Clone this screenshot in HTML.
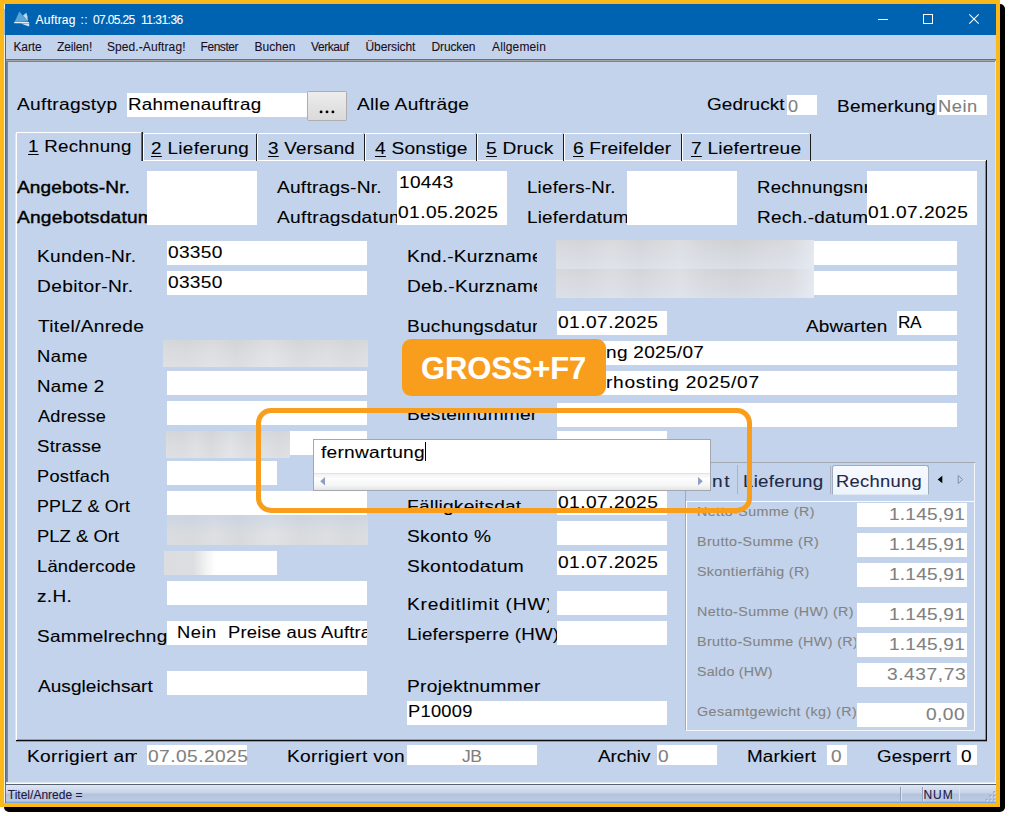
<!DOCTYPE html>
<html><head><meta charset="utf-8"><title>Auftrag</title><style>
html,body{margin:0;padding:0}
body{width:1009px;height:816px;background:#fff;overflow:hidden;position:relative;font-family:"Liberation Sans", sans-serif}
#r div,#r svg,#r span{position:absolute}
#r{position:absolute;left:0;top:0;width:1009px;height:816px;overflow:hidden}
.t{white-space:pre;line-height:1;transform-origin:0 0;display:block;-webkit-text-stroke:0.09px currentColor}
.c{overflow:hidden}
u{text-decoration-thickness:1.2px;text-underline-offset:2.2px}
</style></head><body><div id="r">
<div style="left:4px;top:4px;width:1001px;height:808px;background:#000;border-radius:5px"></div>
<div style="left:0px;top:0px;width:1000.25px;height:806.75px;background:#FAB81A;"></div>
<div style="left:1000px;top:0px;width:0.4px;height:806.75px;background:linear-gradient(90deg,#FAB81A,#7d5c0d);"></div>
<div style="left:4px;top:4px;width:992px;height:798.5px;background:#C2D3EB;"></div>
<div style="left:4px;top:4px;width:1px;height:798.5px;background:#f6f3e4;"></div>
<div style="left:5px;top:4px;width:991px;height:30.75px;background:#0063B1;"></div>
<div style="left:4px;top:9px;width:1px;height:26px;background:#9cc0e4;"></div>
<div style="left:5px;top:35px;width:1px;height:767.5px;background:#2277c3;"></div>
<svg style="left:13px;top:10px" width="18" height="18" viewBox="0 0 18 18">
<polygon points="6.4,1.4 1.6,12 14.8,11.4" fill="#5AA6D8"/>
<polygon points="13.3,2.7 10.0,5.4 14.8,11.2 14.5,6.5" fill="#B9D9F1"/>
<polygon points="1.0,12.1 15.8,12.1 16.2,13.2 1.4,13.3" fill="#e4f1fa"/>
<polygon points="8,13.6 16.2,13.6 16.2,16.6 12.5,15.2" fill="#cfe5f5"/>
</svg>
<span class="t" id="t0" style="left:35.6px;top:13.59px;font-size:12px;color:#fff;letter-spacing:0.179px;">Auftrag</span>
<span class="t" id="t1" style="left:80.5px;top:13.59px;font-size:12px;color:#fff;letter-spacing:0.342px;">::</span>
<span class="t" id="t2" style="left:93px;top:13.59px;font-size:12px;color:#fff;letter-spacing:-0.64px;">07.05.25</span>
<span class="t" id="t3" style="left:141px;top:13.59px;font-size:12px;color:#fff;letter-spacing:-0.512px;">11:31:36</span>
<svg style="left:870px;top:8px" width="120" height="24" viewBox="0 0 120 24"><g stroke="#fff" stroke-width="1" fill="none" shape-rendering="crispEdges"><path d="M8 11.5H18"/><rect x="53.5" y="6.5" width="9" height="9"/></g><path d="M99.3 6.3L108.7 15.7M108.7 6.3L99.3 15.7" stroke="#fff" stroke-width="1.1" fill="none"/></svg>
<span class="t" id="t4" style="left:13.4px;top:41.04px;font-size:12px;color:#1a0d1c;letter-spacing:-0.095px;">Karte</span>
<span class="t" id="t5" style="left:57px;top:41.04px;font-size:12px;color:#1a0d1c;letter-spacing:-0.127px;">Zeilen!</span>
<span class="t" id="t6" style="left:107px;top:41.04px;font-size:12px;color:#1a0d1c;letter-spacing:0.084px;">Sped.-Auftrag!</span>
<span class="t" id="t7" style="left:200.5px;top:41.04px;font-size:12px;color:#1a0d1c;letter-spacing:-0.436px;">Fenster</span>
<span class="t" id="t8" style="left:254.5px;top:41.04px;font-size:12px;color:#1a0d1c;letter-spacing:0.028px;">Buchen</span>
<span class="t" id="t9" style="left:311px;top:41.04px;font-size:12px;color:#1a0d1c;letter-spacing:-0.431px;">Verkauf</span>
<span class="t" id="t10" style="left:365.5px;top:41.04px;font-size:12px;color:#1a0d1c;letter-spacing:-0.097px;">Übersicht</span>
<span class="t" id="t11" style="left:431.5px;top:41.04px;font-size:12px;color:#1a0d1c;letter-spacing:-0.131px;">Drucken</span>
<span class="t" id="t12" style="left:492px;top:41.04px;font-size:12px;color:#1a0d1c;letter-spacing:0.139px;">Allgemein</span>
<div style="left:6px;top:59px;width:990px;height:1px;background:#6e6e6e;"></div>
<div style="left:6px;top:60px;width:990px;height:1px;background:#a4a4a4;"></div>
<div style="left:6px;top:61px;width:990px;height:1px;background:#7d8188;"></div>
<div style="left:6px;top:61px;width:2px;height:722px;background:#868686;"></div>
<div style="left:6px;top:61px;width:1px;height:722px;background:#6d7f97;"></div>
<span class="t" id="t13" style="left:16.75px;top:96.03px;font-size:16.5px;color:#000;letter-spacing:0.278px;transform:scaleX(1.16);">Auftragstyp</span>
<div style="left:127px;top:93px;width:180px;height:23.5px;background:#fff;"></div>
<span class="t" id="t14" style="left:128px;top:95.53px;font-size:16.5px;color:#000;letter-spacing:0.268px;transform:scaleX(1.138);">Rahmenauftrag</span>
<div style="left:307px;top:91px;width:40px;height:30px;box-sizing:border-box;background:linear-gradient(#ededed,#e3e3e3 50%,#dadada);border:1px solid #adadad;border-radius:1.5px"></div>
<svg style="left:315px;top:106px" width="24" height="10" viewBox="0 0 24 10"><circle cx="6.1" cy="5.9" r="1.45" fill="#000"/><circle cx="12" cy="5.9" r="1.45" fill="#000"/><circle cx="17.9" cy="5.9" r="1.45" fill="#000"/></svg>
<span class="t" id="t15" style="left:357px;top:96.03px;font-size:16.5px;color:#000;letter-spacing:0.248px;transform:scaleX(1.16);">Alle Aufträge</span>
<span class="t" id="t16" style="left:706.5px;top:96.03px;font-size:16.5px;color:#000;letter-spacing:0.084px;transform:scaleX(1.148);">Gedruckt</span>
<div style="left:787px;top:95px;width:30px;height:20px;background:#fff;"></div>
<span class="t" id="t17" style="left:788px;top:97.53px;font-size:16.5px;color:#808080;letter-spacing:0.207px;transform:scaleX(1.097);">0</span>
<span class="t" id="t18" style="left:837px;top:98.03px;font-size:16.5px;color:#000;letter-spacing:0.213px;transform:scaleX(1.149);">Bemerkung</span>
<div style="left:937px;top:95px;width:50px;height:20px;background:#fff;"></div>
<span class="t" id="t19" style="left:938px;top:97.53px;font-size:16.5px;color:#808080;letter-spacing:0.492px;transform:scaleX(1.11);">Nein</span>
<div style="left:16.5px;top:160px;width:970.0px;height:580.5px;background:#C2D3EB;"></div>
<div style="left:142px;top:160px;width:844.5px;height:1px;background:#fff;"></div>
<div style="left:16px;top:132px;width:1px;height:608.5px;background:#fff;"></div>
<div style="left:15px;top:133px;width:1px;height:607px;background:#dbe5f3;"></div>
<div style="left:986px;top:160px;width:1px;height:581px;background:#0c0c0c;"></div>
<div style="left:985px;top:161px;width:1px;height:579px;background:rgba(60,60,60,0.45);"></div>
<div style="left:16px;top:740px;width:971px;height:1px;background:#0c0c0c;"></div>
<div style="left:17px;top:739px;width:969px;height:1px;background:rgba(40,40,40,0.3);"></div>
<div style="left:16px;top:741px;width:971px;height:1px;background:rgba(40,40,40,0.35);"></div>
<div style="left:995px;top:61px;width:1px;height:723px;background:#dbe6f5;"></div>
<div style="left:17px;top:131.5px;width:124.5px;height:1.0px;background:#fff;"></div>
<div style="left:142px;top:132px;width:1px;height:29px;background:#1c1c1c;"></div>
<div style="left:141px;top:132px;width:1px;height:29px;background:rgba(20,20,20,0.55);"></div>
<div style="left:143.8px;top:132.9px;width:112.2px;height:1.1px;background:#fff;"></div>
<div style="left:143.3px;top:133.5px;width:1.1px;height:26.5px;background:#fff;"></div>
<div style="left:256.1px;top:133.5px;width:1.2px;height:27.5px;background:#1c1c1c;"></div>
<span class="t" id="t20" style="left:150.5px;top:140.03px;font-size:16.5px;color:#000;letter-spacing:0.29px;transform:scaleX(1.145);"><u>2</u> Lieferung</span>
<div style="left:257.8px;top:132.9px;width:105.7px;height:1.1px;background:#fff;"></div>
<div style="left:257.3px;top:133.5px;width:1.1px;height:26.5px;background:#fff;"></div>
<div style="left:363.6px;top:133.5px;width:1.2px;height:27.5px;background:#1c1c1c;"></div>
<span class="t" id="t21" style="left:267.5px;top:140.03px;font-size:16.5px;color:#000;letter-spacing:0.237px;transform:scaleX(1.139);"><u>3</u> Versand</span>
<div style="left:365.3px;top:132.9px;width:110.2px;height:1.1px;background:#fff;"></div>
<div style="left:364.8px;top:133.5px;width:1.1px;height:26.5px;background:#fff;"></div>
<div style="left:475.6px;top:133.5px;width:1.2px;height:27.5px;background:#1c1c1c;"></div>
<span class="t" id="t22" style="left:375px;top:140.03px;font-size:16.5px;color:#000;letter-spacing:0.195px;transform:scaleX(1.16);"><u>4</u> Sonstige</span>
<div style="left:477.3px;top:132.9px;width:85.2px;height:1.1px;background:#fff;"></div>
<div style="left:476.8px;top:133.5px;width:1.1px;height:26.5px;background:#fff;"></div>
<div style="left:562.6px;top:133.5px;width:1.2px;height:27.5px;background:#1c1c1c;"></div>
<span class="t" id="t23" style="left:486px;top:140.03px;font-size:16.5px;color:#000;letter-spacing:0.198px;transform:scaleX(1.16);"><u>5</u> Druck</span>
<div style="left:564.3px;top:132.9px;width:116.2px;height:1.1px;background:#fff;"></div>
<div style="left:563.8px;top:133.5px;width:1.1px;height:26.5px;background:#fff;"></div>
<div style="left:680.6px;top:133.5px;width:1.2px;height:27.5px;background:#1c1c1c;"></div>
<span class="t" id="t24" style="left:573px;top:140.03px;font-size:16.5px;color:#000;letter-spacing:0.103px;transform:scaleX(1.16);"><u>6</u> Freifelder</span>
<div style="left:682.3px;top:132.9px;width:127.2px;height:1.1px;background:#fff;"></div>
<div style="left:681.8px;top:133.5px;width:1.1px;height:26.5px;background:#fff;"></div>
<div style="left:809.6px;top:133.5px;width:1.2px;height:27.5px;background:#1c1c1c;"></div>
<span class="t" id="t25" style="left:691px;top:140.03px;font-size:16.5px;color:#000;letter-spacing:0.192px;transform:scaleX(1.159);"><u>7</u> Liefertreue</span>
<span class="t" id="t26" style="left:27.5px;top:138.03px;font-size:16.5px;color:#000;letter-spacing:0.254px;transform:scaleX(1.133);"><u>1</u> Rechnung</span>
<span class="t" id="t27" style="left:17px;top:179.03px;font-size:16.5px;color:#000;letter-spacing:0.146px;transform:scaleX(1.153);-webkit-text-stroke:0.4px #000;">Angebots-Nr.</span>
<div class="c" style="left:14px;top:207.03px;width:133px;height:21.4px"><span class="t" id="t28" style="left:3px;top:2px;font-size:16.5px;color:#000;letter-spacing:0.199px;transform:scaleX(1.159);-webkit-text-stroke:0.4px #000;">Angebotsdatum</span></div>
<div style="left:147px;top:171px;width:110px;height:53.5px;background:#fff;"></div>
<span class="t" id="t29" style="left:277px;top:179.03px;font-size:16.5px;color:#000;letter-spacing:0.191px;transform:scaleX(1.16);">Auftrags-Nr.</span>
<div class="c" style="left:274px;top:207.03px;width:123px;height:21.4px"><span class="t" id="t30" style="left:3px;top:2px;font-size:16.5px;color:#000;letter-spacing:0.258px;transform:scaleX(1.16);">Auftragsdatum</span></div>
<div style="left:397px;top:171px;width:110px;height:53.5px;background:#fff;"></div>
<span class="t" id="t31" style="left:398.5px;top:174.03px;font-size:16.5px;color:#000;letter-spacing:0.321px;transform:scaleX(1.151);">10443</span>
<span class="t" id="t32" style="left:398px;top:204.03px;font-size:16.5px;color:#000;letter-spacing:0.387px;transform:scaleX(1.16);">01.05.2025</span>
<span class="t" id="t33" style="left:526.5px;top:179.03px;font-size:16.5px;color:#000;letter-spacing:0.238px;transform:scaleX(1.128);">Liefers-Nr.</span>
<div class="c" style="left:524.5px;top:207.03px;width:102.5px;height:21.4px"><span class="t" id="t34" style="left:2.0px;top:2px;font-size:16.5px;color:#000;letter-spacing:0.184px;transform:scaleX(1.143);">Lieferdatum</span></div>
<div style="left:627px;top:171px;width:110px;height:53.5px;background:#fff;"></div>
<div class="c" style="left:755px;top:177.03px;width:112px;height:21.4px"><span class="t" id="t35" style="left:2px;top:2px;font-size:16.5px;color:#000;letter-spacing:0.21px;transform:scaleX(1.126);">Rechnungsnr</span></div>
<div class="c" style="left:755px;top:207.03px;width:112px;height:21.4px"><span class="t" id="t36" style="left:2px;top:2px;font-size:16.5px;color:#000;letter-spacing:0.191px;transform:scaleX(1.152);">Rech.-datum</span></div>
<div style="left:867px;top:171px;width:110px;height:53.5px;background:#fff;"></div>
<span class="t" id="t37" style="left:868px;top:204.03px;font-size:16.5px;color:#000;letter-spacing:0.39px;transform:scaleX(1.16);">01.07.2025</span>
<span class="t" id="t38" style="left:36.5px;top:247.53px;font-size:16.5px;color:#000;letter-spacing:0.231px;transform:scaleX(1.157);">Kunden-Nr.</span>
<div style="left:167px;top:241px;width:200px;height:24px;background:#fff;"></div>
<span class="t" id="t39" style="left:168px;top:244.03px;font-size:16.5px;color:#000;letter-spacing:0.238px;transform:scaleX(1.16);">03350</span>
<span class="t" id="t40" style="left:36.5px;top:277.53px;font-size:16.5px;color:#000;letter-spacing:0.305px;transform:scaleX(1.16);">Debitor-Nr.</span>
<div style="left:167px;top:271px;width:200px;height:24px;background:#fff;"></div>
<span class="t" id="t41" style="left:168px;top:274.03px;font-size:16.5px;color:#000;letter-spacing:0.238px;transform:scaleX(1.16);">03350</span>
<span class="t" id="t42" style="left:37.5px;top:317.53px;font-size:16.5px;color:#000;letter-spacing:0.268px;transform:scaleX(1.16);">Titel/Anrede</span>
<span class="t" id="t43" style="left:36.5px;top:347.53px;font-size:16.5px;color:#000;letter-spacing:0.413px;transform:scaleX(1.114);">Name</span>
<span class="t" id="t44" style="left:36.5px;top:377.53px;font-size:16.5px;color:#000;letter-spacing:0.311px;transform:scaleX(1.132);">Name 2</span>
<div style="left:167px;top:371px;width:200px;height:24px;background:#fff;"></div>
<span class="t" id="t45" style="left:37.5px;top:407.53px;font-size:16.5px;color:#000;letter-spacing:0.21px;transform:scaleX(1.1);">Adresse</span>
<div style="left:167px;top:401px;width:200px;height:24px;background:#fff;"></div>
<span class="t" id="t46" style="left:36.5px;top:437.53px;font-size:16.5px;color:#000;letter-spacing:0.188px;transform:scaleX(1.129);">Strasse</span>
<div style="left:167px;top:431px;width:200px;height:24px;background:#fff;"></div>
<span class="t" id="t47" style="left:36.5px;top:467.53px;font-size:16.5px;color:#000;letter-spacing:0.249px;transform:scaleX(1.102);">Postfach</span>
<div style="left:167px;top:461px;width:110px;height:24px;background:#fff;"></div>
<span class="t" id="t48" style="left:36.5px;top:497.53px;font-size:16.5px;color:#000;letter-spacing:0.161px;transform:scaleX(1.083);">PPLZ &amp; Ort</span>
<div style="left:167px;top:491px;width:200px;height:24px;background:#fff;"></div>
<span class="t" id="t49" style="left:36.5px;top:527.53px;font-size:16.5px;color:#000;letter-spacing:0.044px;transform:scaleX(1.113);">PLZ &amp; Ort</span>
<span class="t" id="t50" style="left:36.5px;top:557.53px;font-size:16.5px;color:#000;letter-spacing:0.161px;transform:scaleX(1.114);">Ländercode</span>
<div style="left:167px;top:551px;width:110px;height:24px;background:#fff;"></div>
<span class="t" id="t51" style="left:36.5px;top:587.53px;font-size:16.5px;color:#000;letter-spacing:0.309px;transform:scaleX(1.151);">z.H.</span>
<div style="left:167px;top:581px;width:200px;height:24px;background:#fff;"></div>
<div class="c" style="left:34.5px;top:625.53px;width:132.5px;height:21.4px"><span class="t" id="t52" style="left:2.0px;top:2px;font-size:16.5px;color:#000;letter-spacing:0.213px;transform:scaleX(1.149);">Sammelrechng</span></div>
<div style="left:167px;top:621px;width:200px;height:24px;background:#fff;"></div>
<span class="t" id="t53" style="left:177px;top:623.53px;font-size:16.5px;color:#000;letter-spacing:0.492px;transform:scaleX(1.11);">Nein</span>
<div class="c" style="left:226px;top:621.53px;width:141px;height:21.4px"><span class="t" id="t54" style="left:2px;top:2px;font-size:16.5px;color:#000;letter-spacing:0.172px;transform:scaleX(1.114);">Preise aus Auftrag</span></div>
<span class="t" id="t55" style="left:37.5px;top:677.53px;font-size:16.5px;color:#000;letter-spacing:0.04px;transform:scaleX(1.153);">Ausgleichsart</span>
<div style="left:167px;top:671px;width:200px;height:24px;background:#fff;"></div>
<div style="left:163px;top:340px;width:205px;height:27px;background:linear-gradient(180deg,rgba(120,130,150,0.06),rgba(255,255,255,0.0) 45%,rgba(255,255,255,0.12)),linear-gradient(90deg,#dadcdf,#d8dadd 12%,#dddfe2 24%,#d7d9dc 36%,#e0e2e5 52%,#d8dadd 66%,#dcdee1 80%,#d8dadd 90%,#dbdde0);"></div>
<div style="left:166px;top:431px;width:124px;height:27px;background:linear-gradient(180deg,rgba(120,130,150,0.06),rgba(255,255,255,0.0) 45%,rgba(255,255,255,0.12)),linear-gradient(90deg,#dadcdf,#d8dadd 12%,#dddfe2 24%,#d7d9dc 36%,#e0e2e5 52%,#d8dadd 66%,#dcdee1 80%,#d8dadd 90%,#dbdde0);"></div>
<div style="left:167px;top:515px;width:201px;height:30px;background:linear-gradient(180deg,rgba(190,205,230,0.45),rgba(255,255,255,0) 60%),linear-gradient(90deg,#dadcdf,#d8dadd 12%,#dddfe2 24%,#d7d9dc 36%,#e0e2e5 52%,#d8dadd 66%,#dcdee1 80%,#d8dadd 90%,#dbdde0);"></div>
<div style="left:164px;top:551px;width:113px;height:24px;background:linear-gradient(90deg,#dcdde0,#dddee1 26%,#f4f4f5 38%,#fff 46%);"></div>
<div class="c" style="left:404.5px;top:245.53px;width:132.0px;height:21.4px"><span class="t" id="t56" style="left:2.0px;top:2px;font-size:16.5px;color:#000;letter-spacing:0.198px;transform:scaleX(1.159);">Knd.-Kurzname</span></div>
<div class="c" style="left:404.5px;top:275.53px;width:132.0px;height:21.4px"><span class="t" id="t57" style="left:2.0px;top:2px;font-size:16.5px;color:#000;letter-spacing:0.199px;transform:scaleX(1.159);">Deb.-Kurzname</span></div>
<div style="left:557px;top:241px;width:400px;height:24px;background:#fff;"></div>
<div style="left:557px;top:271px;width:400px;height:24px;background:#fff;"></div>
<div style="left:556px;top:240px;width:258px;height:29px;background:linear-gradient(180deg,rgba(0,0,0,0.015),rgba(225,232,245,0.5)),linear-gradient(90deg,#d9dbde,#d6d8db 10%,#dcdee1 22%,#d5d7da 32%,#dfe1e4 48%,#d6d8db 58%,#d2d4d7 70%,#d8dadd 82%,#dbdde1 91%,#e8ebf1);"></div>
<div style="left:556px;top:269px;width:258px;height:29px;background:linear-gradient(180deg,rgba(0,0,0,0.01),rgba(225,232,245,0.4)),linear-gradient(90deg,#d9dbde,#d6d8db 10%,#dcdee1 22%,#d5d7da 32%,#dfe1e4 48%,#d6d8db 58%,#d2d4d7 70%,#d8dadd 82%,#dbdde1 91%,#e8ebf1);"></div>
<div class="c" style="left:404.5px;top:315.53px;width:132.0px;height:21.4px"><span class="t" id="t58" style="left:2.0px;top:2px;font-size:16.5px;color:#000;letter-spacing:0.209px;transform:scaleX(1.158);">Buchungsdatum</span></div>
<div style="left:557px;top:311px;width:110px;height:24px;background:#fff;"></div>
<span class="t" id="t59" style="left:558px;top:313.53px;font-size:16.5px;color:#000;letter-spacing:0.387px;transform:scaleX(1.16);">01.07.2025</span>
<span class="t" id="t60" style="left:805.5px;top:317.53px;font-size:16.5px;color:#000;letter-spacing:0.146px;transform:scaleX(1.148);">Abwarten</span>
<div style="left:897px;top:311px;width:60px;height:24px;background:#fff;"></div>
<span class="t" id="t61" style="left:898px;top:313.53px;font-size:16.5px;color:#000;letter-spacing:-0.46px;transform:scaleX(1.05);">RA</span>
<div style="left:557px;top:341px;width:400px;height:24px;background:#fff;"></div>
<span class="t" id="t62" style="left:606px;top:343.53px;font-size:16.5px;color:#000;letter-spacing:0.276px;transform:scaleX(1.151);">ng 2025/07</span>
<div style="left:557px;top:371px;width:400px;height:24px;background:#fff;"></div>
<span class="t" id="t63" style="left:606px;top:373.53px;font-size:16.5px;color:#000;letter-spacing:0.603px;transform:scaleX(1.16);">rhosting 2025/07</span>
<div class="c" style="left:404.5px;top:404.03px;width:132.0px;height:21.4px"><span class="t" id="t64" style="left:2.0px;top:2px;font-size:16.5px;color:#000;letter-spacing:0.186px;transform:scaleX(1.16);">Bestellnummer</span></div>
<div style="left:557px;top:403px;width:400px;height:24px;background:#fff;"></div>
<div style="left:557px;top:431px;width:110px;height:24px;background:#fff;"></div>
<div class="c" style="left:404.5px;top:495.53px;width:132.0px;height:21.4px"><span class="t" id="t65" style="left:2.0px;top:2px;font-size:16.5px;color:#000;letter-spacing:0.163px;transform:scaleX(1.16);">Fälligkeitsdat</span></div>
<div style="left:557px;top:491px;width:110px;height:24px;background:#fff;"></div>
<span class="t" id="t66" style="left:558px;top:493.53px;font-size:16.5px;color:#000;letter-spacing:0.387px;transform:scaleX(1.16);">01.07.2025</span>
<span class="t" id="t67" style="left:406.5px;top:527.53px;font-size:16.5px;color:#000;letter-spacing:0.255px;transform:scaleX(1.16);">Skonto %</span>
<div style="left:557px;top:521px;width:110px;height:24px;background:#fff;"></div>
<span class="t" id="t68" style="left:406.5px;top:557.53px;font-size:16.5px;color:#000;letter-spacing:0.333px;transform:scaleX(1.16);">Skontodatum</span>
<div style="left:557px;top:551px;width:110px;height:24px;background:#fff;"></div>
<span class="t" id="t69" style="left:558px;top:553.53px;font-size:16.5px;color:#000;letter-spacing:0.387px;transform:scaleX(1.16);">01.07.2025</span>
<div class="c" style="left:404.5px;top:593.53px;width:144.0px;height:21.4px"><span class="t" id="t70" style="left:2.0px;top:2px;font-size:16.5px;color:#000;letter-spacing:0.664px;transform:scaleX(1.16);">Kreditlimit (HW)</span></div>
<div style="left:557px;top:591px;width:110px;height:24px;background:#fff;"></div>
<div class="c" style="left:404.5px;top:623.53px;width:152.5px;height:21.4px"><span class="t" id="t71" style="left:2.0px;top:2px;font-size:16.5px;color:#000;letter-spacing:0.176px;transform:scaleX(1.135);">Liefersperre (HW)</span></div>
<div style="left:557px;top:621px;width:110px;height:24px;background:#fff;"></div>
<span class="t" id="t72" style="left:406.5px;top:677.53px;font-size:16.5px;color:#000;letter-spacing:0.256px;transform:scaleX(1.16);">Projektnummer</span>
<div style="left:407px;top:701px;width:260px;height:24px;background:#fff;"></div>
<span class="t" id="t73" style="left:408px;top:703.03px;font-size:16.5px;color:#000;letter-spacing:0.237px;transform:scaleX(1.108);">P10009</span>
<div style="left:685.2px;top:462.2px;width:289.8px;height:268.3px;background:#a3a9b3;"></div>
<div style="left:686.2px;top:463.2px;width:288.8px;height:267.3px;background:#C2D3EB;"></div>
<div style="left:974px;top:463.2px;width:1px;height:267.3px;background:#f2f6fc;"></div>
<div style="left:686.2px;top:729.5px;width:288.8px;height:1.0px;background:#f2f6fc;"></div>
<div style="left:686.2px;top:501px;width:1.0px;height:229px;background:#fff;"></div>
<div style="left:686.2px;top:500.8px;width:287.8px;height:1.2px;background:#fbfcfe;"></div>
<span class="t" id="t74" style="left:712px;top:472.53px;font-size:16.5px;color:#1e2946;letter-spacing:1.457px;transform:scaleX(1.16);">nt</span>
<div style="left:736.5px;top:465px;width:1.0px;height:28.5px;background:#a9b3c4;"></div>
<span class="t" id="t75" style="left:742.5px;top:472.53px;font-size:16.5px;color:#1e2946;letter-spacing:0.227px;transform:scaleX(1.136);">Lieferung</span>
<div style="left:831.5px;top:465.4px;width:97.6px;height:29.4px;box-sizing:border-box;background:linear-gradient(#f6faff,#eef4fc);border:1px solid #9fabc0;border-bottom-color:#dfe8f5;border-radius:3px 3px 0 0"></div>
<div style="left:829.5px;top:466px;width:1.0px;height:28px;background:#aab3c3;"></div>
<span class="t" id="t76" style="left:835.8px;top:473.03px;font-size:16.5px;color:#1e2946;letter-spacing:0.28px;transform:scaleX(1.11);">Rechnung</span>
<svg style="left:934px;top:472px" width="34" height="16" viewBox="0 0 34 16"><polygon points="8.3,3.7 8.3,11.3 3.7,7.5" fill="#000"/><polygon points="24.2,3.4 24.2,11.6 28.6,7.5" fill="none" stroke="#8d9096" stroke-width="1"/></svg>
<div class="c" style="left:694.5px;top:503.99px;width:161.5px;height:16.0px"><span class="t" id="t77" style="left:2.0px;top:2px;font-size:12.3px;color:#838383;letter-spacing:0.347px;transform:scaleX(1.16);">Netto-Summe (R)</span></div>
<div style="left:857px;top:503px;width:110px;height:24px;background:#fff;"></div>
<span class="t" id="t78" style="left:889px;top:505.53px;font-size:16.5px;color:#808080;letter-spacing:0.186px;transform:scaleX(1.156);">1.145,91</span>
<div class="c" style="left:694.5px;top:533.99px;width:161.5px;height:16.0px"><span class="t" id="t79" style="left:2.0px;top:2px;font-size:12.3px;color:#838383;letter-spacing:0.341px;transform:scaleX(1.16);">Brutto-Summe (R)</span></div>
<div style="left:857px;top:533px;width:110px;height:24px;background:#fff;"></div>
<span class="t" id="t80" style="left:889px;top:535.53px;font-size:16.5px;color:#808080;letter-spacing:0.186px;transform:scaleX(1.156);">1.145,91</span>
<div class="c" style="left:694.5px;top:563.99px;width:161.5px;height:16.0px"><span class="t" id="t81" style="left:2.0px;top:2px;font-size:12.3px;color:#838383;letter-spacing:0.286px;transform:scaleX(1.16);">Skontierfähig (R)</span></div>
<div style="left:857px;top:563px;width:110px;height:24px;background:#fff;"></div>
<span class="t" id="t82" style="left:889px;top:565.53px;font-size:16.5px;color:#808080;letter-spacing:0.186px;transform:scaleX(1.156);">1.145,91</span>
<div class="c" style="left:694.5px;top:603.99px;width:161.5px;height:16.0px"><span class="t" id="t83" style="left:2.0px;top:2px;font-size:12.3px;color:#838383;letter-spacing:0.341px;transform:scaleX(1.16);">Netto-Summe (HW) (R)</span></div>
<div style="left:857px;top:603px;width:110px;height:24px;background:#fff;"></div>
<span class="t" id="t84" style="left:889px;top:605.53px;font-size:16.5px;color:#808080;letter-spacing:0.186px;transform:scaleX(1.156);">1.145,91</span>
<div class="c" style="left:694.5px;top:633.99px;width:161.5px;height:16.0px"><span class="t" id="t85" style="left:2.0px;top:2px;font-size:12.3px;color:#838383;letter-spacing:0.336px;transform:scaleX(1.16);">Brutto-Summe (HW) (R)</span></div>
<div style="left:857px;top:633px;width:110px;height:24px;background:#fff;"></div>
<span class="t" id="t86" style="left:889px;top:635.53px;font-size:16.5px;color:#808080;letter-spacing:0.186px;transform:scaleX(1.156);">1.145,91</span>
<div class="c" style="left:694.5px;top:663.99px;width:161.5px;height:16.0px"><span class="t" id="t87" style="left:2.0px;top:2px;font-size:12.3px;color:#838383;letter-spacing:0.233px;transform:scaleX(1.15);">Saldo (HW)</span></div>
<div style="left:857px;top:663px;width:110px;height:24px;background:#fff;"></div>
<span class="t" id="t88" style="left:886.5px;top:665.53px;font-size:16.5px;color:#808080;letter-spacing:0.499px;transform:scaleX(1.16);">3.437,73</span>
<div class="c" style="left:694.5px;top:703.99px;width:161.5px;height:16.0px"><span class="t" id="t89" style="left:2.0px;top:2px;font-size:12.3px;color:#838383;letter-spacing:0.373px;transform:scaleX(1.16);">Gesamtgewicht (kg) (R)</span></div>
<div style="left:857px;top:703px;width:110px;height:24px;background:#fff;"></div>
<span class="t" id="t90" style="left:926px;top:705.53px;font-size:16.5px;color:#808080;letter-spacing:0.365px;transform:scaleX(1.16);">0,00</span>
<div class="c" style="left:25px;top:745.53px;width:112px;height:21.4px"><span class="t" id="t91" style="left:2px;top:2px;font-size:16.5px;color:#000;letter-spacing:0.272px;transform:scaleX(1.16);">Korrigiert am</span></div>
<div style="left:147px;top:745px;width:100px;height:19.5px;background:#fff;"></div>
<span class="t" id="t92" style="left:148px;top:748.03px;font-size:16.5px;color:#808080;letter-spacing:0.387px;transform:scaleX(1.16);">07.05.2025</span>
<span class="t" id="t93" style="left:286.5px;top:747.53px;font-size:16.5px;color:#000;letter-spacing:0.248px;transform:scaleX(1.16);">Korrigiert von</span>
<div style="left:407px;top:745px;width:130px;height:19.5px;background:#fff;"></div>
<span class="t" id="t94" style="left:462px;top:748.03px;font-size:16.5px;color:#808080;letter-spacing:-0.548px;transform:scaleX(1.059);">JB</span>
<span class="t" id="t95" style="left:597.5px;top:747.53px;font-size:16.5px;color:#000;letter-spacing:-0.052px;transform:scaleX(1.151);">Archiv</span>
<div style="left:657px;top:745px;width:60px;height:19.5px;background:#fff;"></div>
<span class="t" id="t96" style="left:658px;top:748.03px;font-size:16.5px;color:#808080;letter-spacing:0.193px;transform:scaleX(1.153);">0</span>
<span class="t" id="t97" style="left:747px;top:747.53px;font-size:16.5px;color:#000;letter-spacing:0.121px;transform:scaleX(1.143);">Markiert</span>
<div style="left:827px;top:745px;width:20px;height:19.5px;background:#fff;"></div>
<span class="t" id="t98" style="left:831px;top:748.03px;font-size:16.5px;color:#808080;letter-spacing:0.193px;transform:scaleX(1.153);">0</span>
<span class="t" id="t99" style="left:876.5px;top:747.53px;font-size:16.5px;color:#000;letter-spacing:0.13px;transform:scaleX(1.133);">Gesperrt</span>
<div style="left:957px;top:745px;width:20px;height:19.5px;background:#fff;"></div>
<span class="t" id="t100" style="left:961px;top:748.03px;font-size:16.5px;color:#000;letter-spacing:0.193px;transform:scaleX(1.153);">0</span>
<div style="left:5.5px;top:782px;width:990.5px;height:1px;background:#dfe7f3;"></div>
<div style="left:5.5px;top:783px;width:990.5px;height:1.3px;background:#fff;"></div>
<div style="left:5.5px;top:784.3px;width:990.5px;height:0.8px;background:#59626f;"></div>
<div style="left:5.5px;top:785.1px;width:990.5px;height:17.4px;background:linear-gradient(#dde6f4,#c7d4e8 45%,#b3c3db 55%,#bccbe2 90%,#9fb6d6);"></div>
<div style="left:4.9px;top:785px;width:0.8px;height:17.5px;background:#3f7fc4;"></div>
<div style="left:5.5px;top:801.6px;width:990.5px;height:0.9px;background:#7fa6d8;"></div>
<span class="t" id="t101" style="left:7.75px;top:789.04px;font-size:12px;color:#231545;letter-spacing:0.012px;">Titel/Anrede =</span>
<div style="left:900.2px;top:786.5px;width:0.9px;height:14.5px;background:#94a3bb;"></div>
<div style="left:901.1px;top:786.5px;width:1.0px;height:14.5px;background:#dbe4f2;"></div>
<div style="left:922.4px;top:786.5px;width:0.9px;height:14.5px;background:#94a3bb;"></div>
<div style="left:923.3px;top:786.5px;width:1.0px;height:14.5px;background:#dbe4f2;"></div>
<div style="left:958.5px;top:786.5px;width:0.9px;height:14.5px;background:#94a3bb;"></div>
<div style="left:959.4px;top:786.5px;width:1.0px;height:14.5px;background:#dbe4f2;"></div>
<span class="t" id="t102" style="left:923.5px;top:789.04px;font-size:12px;color:#231545;letter-spacing:0.915px;">NUM</span>
<svg style="left:985px;top:789.5px" width="11" height="12" viewBox="0 0 11 12"><rect x="8.2" y="1.2" width="2.1" height="2.1" fill="#8ea7cd"/><rect x="9.2" y="2.2" width="1.4" height="1.4" fill="#dfe8f5"/><rect x="4.4" y="5" width="2.1" height="2.1" fill="#8ea7cd"/><rect x="5.4" y="6" width="1.4" height="1.4" fill="#dfe8f5"/><rect x="8.2" y="5" width="2.1" height="2.1" fill="#8ea7cd"/><rect x="9.2" y="6" width="1.4" height="1.4" fill="#dfe8f5"/><rect x="0.6" y="8.8" width="2.1" height="2.1" fill="#8ea7cd"/><rect x="1.6" y="9.8" width="1.4" height="1.4" fill="#dfe8f5"/><rect x="4.4" y="8.8" width="2.1" height="2.1" fill="#8ea7cd"/><rect x="5.4" y="9.8" width="1.4" height="1.4" fill="#dfe8f5"/><rect x="8.2" y="8.8" width="2.1" height="2.1" fill="#8ea7cd"/><rect x="9.2" y="9.8" width="1.4" height="1.4" fill="#dfe8f5"/></svg>
<div style="left:313px;top:438.5px;width:397.5px;height:52.5px;box-sizing:border-box;background:#fff;border:1px solid #a3a7ae"></div>
<div style="left:314px;top:473.5px;width:395.5px;height:16.5px;background:linear-gradient(#f1f1f1,#fdfdfd 30%,#f6f6f6 70%,#e4e4e4);"></div>
<div style="left:314px;top:473px;width:395.5px;height:0.8px;background:#e3e3e3;"></div>
<svg style="left:318px;top:474px" width="10" height="16" viewBox="0 0 10 16"><polygon points="7,3 7,11.5 2.2,7.2" fill="#8e9fc6"/></svg>
<svg style="left:694px;top:474px" width="12" height="16" viewBox="0 0 12 16"><polygon points="4,3 4,11.5 8.8,7.2" fill="#8e9fc6"/></svg>
<span class="t" id="t103" style="left:320.5px;top:443.53px;font-size:16.5px;color:#000;letter-spacing:0.222px;transform:scaleX(1.16);">fernwartung</span>
<div style="left:425.3px;top:441.5px;width:1.0px;height:19.0px;background:#000;"></div>
<div style="left:256.4px;top:408px;width:495.8px;height:105px;box-sizing:border-box;border:5px solid #F99D1C;border-radius:15px"></div>
<div style="left:402px;top:339px;width:204px;height:56.5px;background:#F99D1C;border-radius:9px"></div>
<span class="t" id="t104" style="left:420.9px;top:352.96px;font-size:31px;color:#fff;letter-spacing:-0.125px;font-weight:bold;">GROSS+F7</span>
</div></body></html>
